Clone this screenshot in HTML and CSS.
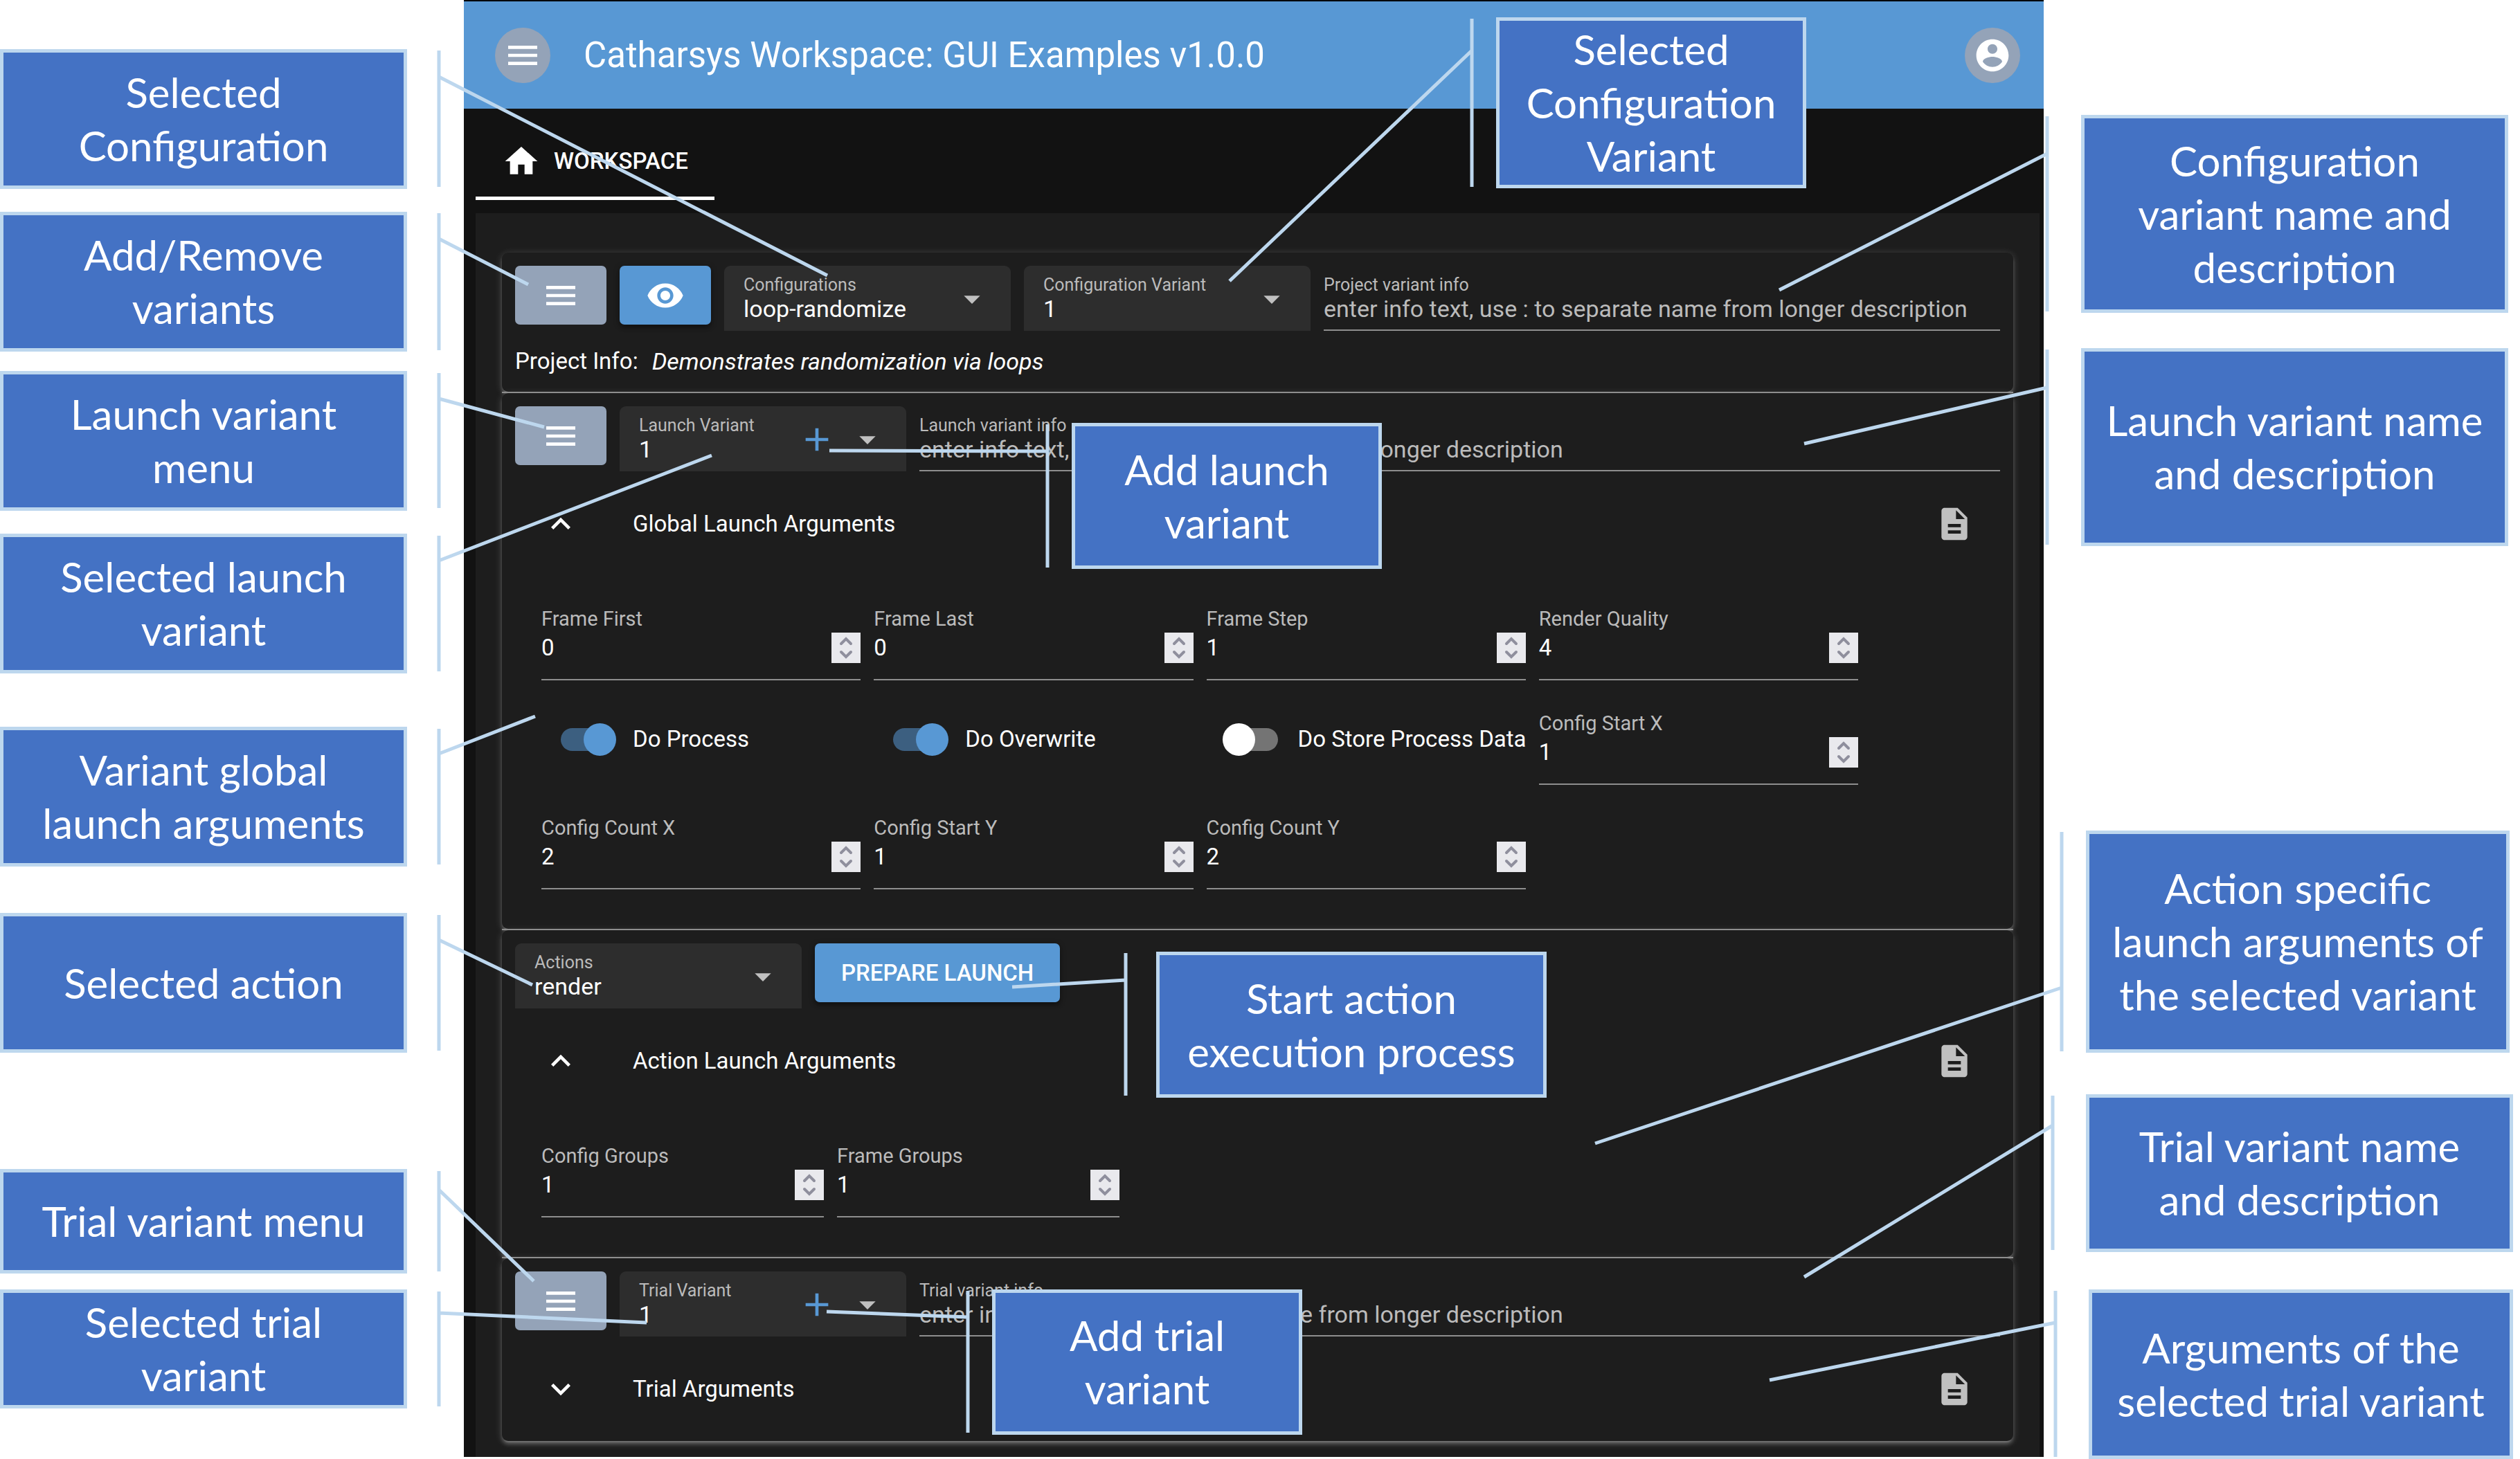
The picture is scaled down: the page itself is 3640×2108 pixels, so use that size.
FILE: index.html
```html
<!DOCTYPE html>
<html lang="en">
<head>
<meta charset="utf-8">
<title>Catharsys Workspace</title>
<link rel="stylesheet" href="styles.css">
</head>
<body>
<svg class="sprite" aria-hidden="true">
  <symbol id="i-menu" viewBox="0 0 24 24"><path d="M3 18h18v-2H3v2zm0-5h18v-2H3v2zm0-7v2h18V6H3z"/></symbol>
  <symbol id="i-account" viewBox="0 0 24 24"><path d="M12 2C6.48 2 2 6.48 2 12s4.48 10 10 10 10-4.480 10-10S17.520 2 12 2zm0 3c1.660 0 3 1.340 3 3s-1.340 3-3 3-3-1.340-3-3 1.340-3 3-3zm0 14.200c-2.500 0-4.710-1.280-6-3.220.030-1.990 4-3.080 6-3.080 1.990 0 5.970 1.090 6 3.080-1.290 1.940-3.500 3.220-6 3.220z"/></symbol>
  <symbol id="i-home" viewBox="0 0 24 24"><path d="M10 20v-6h4v6h5v-8h3L12 3 2 12h3v8z"/></symbol>
  <symbol id="i-eye" viewBox="0 0 24 24"><path d="M12 4.500C7 4.500 2.730 7.610 1 12c1.730 4.390 6 7.500 11 7.500s9.270-3.110 11-7.500c-1.730-4.390-6-7.500-11-7.500zM12 17c-2.760 0-5-2.240-5-5s2.240-5 5-5 5 2.240 5 5-2.240 5-5 5zm0-8c-1.660 0-3 1.340-3 3s1.340 3 3 3 3-1.340 3-3-1.340-3-3-3z"/></symbol>
  <symbol id="i-drop" viewBox="0 0 24 24"><path d="M7 10l5 5 5-5z"/></symbol>
  <symbol id="i-add" viewBox="0 0 24 24"><path d="M19 13h-6v6h-2v-6H5v-2h6V5h2v6h6v2z"/></symbol>
  <symbol id="i-less" viewBox="0 0 24 24"><path d="M12 8l-6 6 1.410 1.410L12 10.830l4.590 4.580L18 14z"/></symbol>
  <symbol id="i-more" viewBox="0 0 24 24"><path d="M16.590 8.590L12 13.170 7.410 8.590 6 10l6 6 6-6z"/></symbol>
  <symbol id="i-doc" viewBox="0 0 24 24"><path d="M14 2H6c-1.100 0-1.990.900-1.990 2L4 20c0 1.100.890 2 1.990 2H18c1.100 0 2-.900 2-2V8l-6-6zm2 16H8v-2h8v2zm0-4H8v-2h8v2zm-3-5V3.500L18.500 9H13z"/></symbol>
  <symbol id="i-step" viewBox="0 0 42 44"><path d="M14 16l7-7 7 7M14 28l7 7 7-7" fill="none" stroke="#8f8f9d" stroke-width="4" stroke-linecap="round"/></symbol>
</svg>

<div class="stage">
  <div class="app">
    <header class="topbar">
      <button class="round" aria-label="Main menu"><svg class="icon"><use href="#i-menu"/></svg></button>
      <h1 class="title">Catharsys Workspace: GUI Examples v1.0.0</h1>
      <button class="round" aria-label="Account"><svg class="icon"><use href="#i-account"/></svg></button>
    </header>
    <nav class="tabs">
      <a class="tab" href="#workspace"><svg class="icon"><use href="#i-home"/></svg><span>WORKSPACE</span></a>
    </nav>

    <main class="panel" id="workspace">
      <section class="card">
        <div class="row">
          <button class="btn gray" aria-label="Configuration menu"><svg class="icon"><use href="#i-menu"/></svg></button>
          <button class="btn" aria-label="Show"><svg class="icon"><use href="#i-eye"/></svg></button>
          <div class="select">
            <div class="select-text"><label for="cfg">Configurations</label><select id="cfg"><option>loop-randomize</option></select></div>
            <svg class="icon drop"><use href="#i-drop"/></svg>
          </div>
          <div class="select">
            <div class="select-text"><label for="cfgvar">Configuration Variant</label><select id="cfgvar"><option>1</option></select></div>
            <svg class="icon drop"><use href="#i-drop"/></svg>
          </div>
          <div class="info"><label for="pinfo">Project variant info</label><input id="pinfo" type="text" placeholder="enter info text, use : to separate name from longer description"></div>
        </div>
        <p class="project"><span>Project Info:</span><em>Demonstrates randomization via loops</em></p>
      </section>

      <section class="card">
        <div class="row">
          <button class="btn gray" aria-label="Launch variant menu"><svg class="icon"><use href="#i-menu"/></svg></button>
          <div class="select">
            <div class="select-text"><label for="lvar">Launch Variant</label><select id="lvar"><option>1</option></select></div>
            <button class="add" aria-label="Add launch variant"><svg class="icon"><use href="#i-add"/></svg></button>
            <svg class="icon drop"><use href="#i-drop"/></svg>
          </div>
          <div class="info"><label for="linfo">Launch variant info</label><input id="linfo" type="text" placeholder="enter info text, use : to separate name from longer description"></div>
        </div>
        <div class="expander">
          <button class="toggle"><svg class="icon"><use href="#i-less"/></svg><span>Global Launch Arguments</span></button>
          <button class="doc" aria-label="Details"><svg class="icon"><use href="#i-doc"/></svg></button>
        </div>
        <div class="fields four">
          <div class="number"><label for="ff">Frame First</label><div class="value"><input id="ff" type="number" value="0"><svg class="stepper"><use href="#i-step"/></svg></div></div>
          <div class="number"><label for="fl">Frame Last</label><div class="value"><input id="fl" type="number" value="0"><svg class="stepper"><use href="#i-step"/></svg></div></div>
          <div class="number"><label for="fs">Frame Step</label><div class="value"><input id="fs" type="number" value="1"><svg class="stepper"><use href="#i-step"/></svg></div></div>
          <div class="number"><label for="rq">Render Quality</label><div class="value"><input id="rq" type="number" value="4"><svg class="stepper"><use href="#i-step"/></svg></div></div>
          <label class="switch"><input type="checkbox" checked><span>Do Process</span></label>
          <label class="switch"><input type="checkbox" checked><span>Do Overwrite</span></label>
          <label class="switch"><input type="checkbox"><span>Do Store Process Data</span></label>
          <div class="number"><label for="sx">Config Start X</label><div class="value"><input id="sx" type="number" value="1"><svg class="stepper"><use href="#i-step"/></svg></div></div>
          <div class="number"><label for="cx">Config Count X</label><div class="value"><input id="cx" type="number" value="2"><svg class="stepper"><use href="#i-step"/></svg></div></div>
          <div class="number"><label for="sy">Config Start Y</label><div class="value"><input id="sy" type="number" value="1"><svg class="stepper"><use href="#i-step"/></svg></div></div>
          <div class="number"><label for="cy">Config Count Y</label><div class="value"><input id="cy" type="number" value="2"><svg class="stepper"><use href="#i-step"/></svg></div></div>
        </div>
      </section>

      <section class="card">
        <div class="row">
          <div class="select">
            <div class="select-text"><label for="act">Actions</label><select id="act"><option>render</option></select></div>
            <svg class="icon drop"><use href="#i-drop"/></svg>
          </div>
          <button class="btn">PREPARE LAUNCH</button>
        </div>
        <div class="expander">
          <button class="toggle"><svg class="icon"><use href="#i-less"/></svg><span>Action Launch Arguments</span></button>
          <button class="doc" aria-label="Details"><svg class="icon"><use href="#i-doc"/></svg></button>
        </div>
        <div class="fields pair">
          <div class="number"><label for="cg">Config Groups</label><div class="value"><input id="cg" type="number" value="1"><svg class="stepper"><use href="#i-step"/></svg></div></div>
          <div class="number"><label for="fg">Frame Groups</label><div class="value"><input id="fg" type="number" value="1"><svg class="stepper"><use href="#i-step"/></svg></div></div>
        </div>
      </section>

      <section class="card">
        <div class="row">
          <button class="btn gray" aria-label="Trial variant menu"><svg class="icon"><use href="#i-menu"/></svg></button>
          <div class="select">
            <div class="select-text"><label for="tvar">Trial Variant</label><select id="tvar"><option>1</option></select></div>
            <button class="add" aria-label="Add trial variant"><svg class="icon"><use href="#i-add"/></svg></button>
            <svg class="icon drop"><use href="#i-drop"/></svg>
          </div>
          <div class="info"><label for="tinfo">Trial variant info</label><input id="tinfo" type="text" placeholder="enter info text, use : to separate name from longer description"></div>
        </div>
        <div class="expander">
          <button class="toggle"><svg class="icon"><use href="#i-more"/></svg><span>Trial Arguments</span></button>
          <button class="doc" aria-label="Details"><svg class="icon"><use href="#i-doc"/></svg></button>
        </div>
      </section>
    </main>
  </div>

  <svg class="leaders" aria-hidden="true">
    <path d="M634 73V270M634 111L1195 398"/>
    <path d="M634 308V506M634 345L763 411"/>
    <path d="M634 539V734M634 576L786 617"/>
    <path d="M634 774V970M634 810L1028 658"/>
    <path d="M634 1053V1249M634 1089L773 1035"/>
    <path d="M634 1322V1518M634 1358L769 1423"/>
    <path d="M634 1692V1837M634 1719L771 1851"/>
    <path d="M634 1866V2032M634 1897L934 1911"/>
    <path d="M2126 27V270M2126 73L1776 406"/>
    <path d="M1513 613V820M1513 652L1198 651"/>
    <path d="M1626 1377V1583M1626 1416L1462 1426"/>
    <path d="M1398 1865V2070M1398 1903L1194 1895"/>
    <path d="M2957 168V450M2957 222L2570 419"/>
    <path d="M2957 505V787M2957 560L2606 641"/>
    <path d="M2978 1202V1519M2978 1427L2304 1652"/>
    <path d="M2965 1583V1806M2965 1626L2606 1845"/>
    <path d="M2969 1865V2105M2969 1911L2556 1994"/>
  </svg>

  <aside class="callout left c-config">Selected<br>Configuration</aside>
  <aside class="callout left c-addremove">Add/Remove<br>variants</aside>
  <aside class="callout left c-launchmenu">Launch variant<br>menu</aside>
  <aside class="callout left c-launchsel">Selected launch<br>variant</aside>
  <aside class="callout left c-globalargs">Variant global<br>launch arguments</aside>
  <aside class="callout left c-action">Selected action</aside>
  <aside class="callout left c-trialmenu">Trial variant menu</aside>
  <aside class="callout left c-trialsel">Selected trial<br>variant</aside>
  <aside class="callout c-cfgvariant">Selected<br>Configuration<br>Variant</aside>
  <aside class="callout c-addlaunch">Add launch<br>variant</aside>
  <aside class="callout c-start">Start action<br>execution process</aside>
  <aside class="callout c-addtrial">Add trial<br>variant</aside>
  <aside class="callout c-cfgname">Configuration<br>variant name and<br>description</aside>
  <aside class="callout c-launchname">Launch variant name<br>and description</aside>
  <aside class="callout c-actionargs">Action specific<br>launch arguments of<br>the selected variant</aside>
  <aside class="callout c-trialname">Trial variant name<br>and description</aside>
  <aside class="callout c-trialargs">Arguments of the<br>selected trial variant</aside>
</div>
</body>
</html>
```
FILE: styles.css
```css
:root {
  --primary: #5898d4;
  --slate: #94a3b8;
  --panel: #1d1d1d;
  --muted: #bbb;
  --line: #8e8e8e;
  --gap: 19px;
}

* { box-sizing: border-box; }

body {
  margin: 0;
  background: #fff;
  color: #fff;
  font: 400 33px/50px Roboto, sans-serif;
}

button, input, select {
  margin: 0;
  padding: 0;
  border: 0;
  background: none;
  color: inherit;
  font: inherit;
}

.sprite { display: none; }
.icon { display: block; flex: none; width: 56px; height: 56px; fill: currentColor; }

.stage { position: relative; overflow: hidden; }

/* Application */
.app {
  margin: 0 688px 3px 670px;
  padding-right: 6px;
  border-top: 2px solid #000;
  background: #121212;
}

.topbar {
  display: flex;
  align-items: center;
  gap: 48px;
  height: 155px;
  margin-right: -6px;
  padding: 0 34px 0 45px;
  background: var(--primary);
}
.round {
  display: flex;
  align-items: center;
  justify-content: center;
  width: 80px;
  height: 80px;
  border-radius: 50%;
  background: var(--slate);
}
.title { flex: 1; margin: 0; font-size: 51px; font-weight: 400; line-height: 60px; }

.tabs { display: flex; padding: 19px 0 19px 17px; }
.tab {
  display: flex;
  align-items: center;
  gap: var(--gap);
  height: 113px;
  padding: 5px 38px 0;
  border-bottom: 5px solid #fff;
  color: #fff;
  font-weight: 500;
  text-decoration: none;
}

.panel {
  display: flex;
  flex-direction: column;
  gap: 2px;
  margin-left: 17px;
  padding: 57px 38px 23px;
  background: var(--panel);
}
.card {
  position: relative;
  display: flex;
  flex-direction: column;
  gap: var(--gap);
  padding: var(--gap);
  border-radius: 9px;
  background: var(--panel);
  box-shadow: 0 2px 12px rgba(255, 255, 255, .2), 0 5px 5px rgba(255, 255, 255, .18), 0 5px 2px -3px rgba(255, 255, 255, .16);
}
.card + .card::before {
  content: "";
  position: absolute;
  inset: -2px 0 auto;
  height: 2px;
  background: var(--line);
}

.row { display: flex; align-items: flex-start; gap: var(--gap); }

.btn {
  display: flex;
  align-items: center;
  height: 85px;
  padding: 0 38px;
  border-radius: 7px;
  background: var(--primary);
  box-shadow: 0 2px 10px rgba(0, 0, 0, .3), 0 5px 5px rgba(0, 0, 0, .2);
  font-weight: 500;
}
.btn.gray { background: var(--slate); box-shadow: none; }

.select {
  display: flex;
  align-items: center;
  gap: 17px;
  width: 414px;
  height: 94px;
  padding: 2px 28px 0;
  border-radius: 9px 9px 0 0;
  background: #2d2d2d;
}
.select-text { flex: 1; display: flex; flex-direction: column; min-width: 0; }
.select label, .info label {
  display: block;
  color: var(--muted);
  font-size: 25px;
  line-height: 28px;
  white-space: nowrap;
}
.select select { width: 100%; height: 40px; appearance: none; font-size: 34px; line-height: 40px; }
.add { color: var(--primary); }
.drop { color: #c0c0c0; }

.info { flex: 1; height: 94px; padding-top: 14px; border-bottom: 2px solid var(--line); }
.info input { display: block; width: 100%; height: 40px; font-size: 34px; }
.info input::placeholder { color: var(--muted); opacity: 1; }

.project { display: flex; gap: 20px; margin: 0; }
.project em { font-size: 34px; }

.expander { display: flex; align-items: center; justify-content: space-between; height: 113px; padding: 0 38px; }
.toggle { display: flex; align-items: center; gap: 76px; }
.doc { color: #c0c0c0; }

.fields { display: grid; gap: var(--gap); padding: 19px 38px 38px; }
.fields.four { grid-template-columns: repeat(4, minmax(0, 1fr)); width: 1978px; max-width: 100%; }
.fields.pair { grid-template-columns: repeat(2, 408px); }

.number { height: 132px; padding-top: 27px; border-bottom: 2px solid var(--line); }
.number label { display: block; color: var(--muted); font-size: 29px; line-height: 32px; }
.value { display: flex; height: 44px; margin-top: 4px; }
.value input { flex: 1; min-width: 0; appearance: textfield; }
.value input::-webkit-inner-spin-button { appearance: none; margin: 0; }
.stepper { flex: none; width: 42px; height: 44px; background: #e9e9ed; }

.switch { display: flex; align-items: center; gap: 29px; padding-left: 28px; white-space: nowrap; }
.switch input {
  display: flex;
  flex: none;
  align-items: center;
  appearance: none;
  width: 75px;
  height: 33px;
  border-radius: 17px;
  background: #747474;
}
.switch input::before {
  content: "";
  flex: none;
  width: 47px;
  height: 47px;
  margin-left: -5px;
  border-radius: 50%;
  background: #fff;
}
.switch input:checked { background: #3c5f80; }
.switch input:checked::before { margin-left: 33px; background: var(--primary); }

/* Annotations laid over the application */
.leaders {
  position: absolute;
  inset: 0;
  width: 100%;
  height: 100%;
  fill: none;
  stroke: #bdd7ee;
  stroke-width: 5px;
  pointer-events: none;
}
.callout {
  position: absolute;
  display: flex;
  align-items: center;
  justify-content: center;
  border: 5px solid #bdd7ee;
  background: #4472c4;
  font: 400 60px/77px Lato, sans-serif;
  text-align: center;
  white-space: nowrap;
}
.left { left: 0; width: 588px; height: 202px; }
.c-config { top: 71px; }
.c-addremove { top: 306px; }
.c-launchmenu { top: 536px; }
.c-launchsel { top: 771px; }
.c-globalargs { top: 1050px; }
.c-action { top: 1319px; }
.c-trialmenu { top: 1689px; height: 151px; }
.c-trialsel { top: 1863px; height: 172px; }
.c-cfgvariant { left: 2161px; top: 25px; width: 448px; height: 247px; }
.c-addlaunch { left: 1548px; top: 611px; width: 448px; height: 211px; }
.c-start { left: 1670px; top: 1375px; width: 564px; height: 211px; }
.c-addtrial { left: 1433px; top: 1863px; width: 448px; height: 210px; }
.c-cfgname { right: 17px; top: 166px; width: 617px; height: 286px; }
.c-launchname { right: 17px; top: 503px; width: 617px; height: 286px; }
.c-actionargs { right: 15px; top: 1200px; width: 612px; height: 321px; }
.c-trialname { right: 10px; top: 1581px; width: 617px; height: 228px; }
.c-trialargs { right: 10px; top: 1863px; width: 613px; height: 245px; }
```
